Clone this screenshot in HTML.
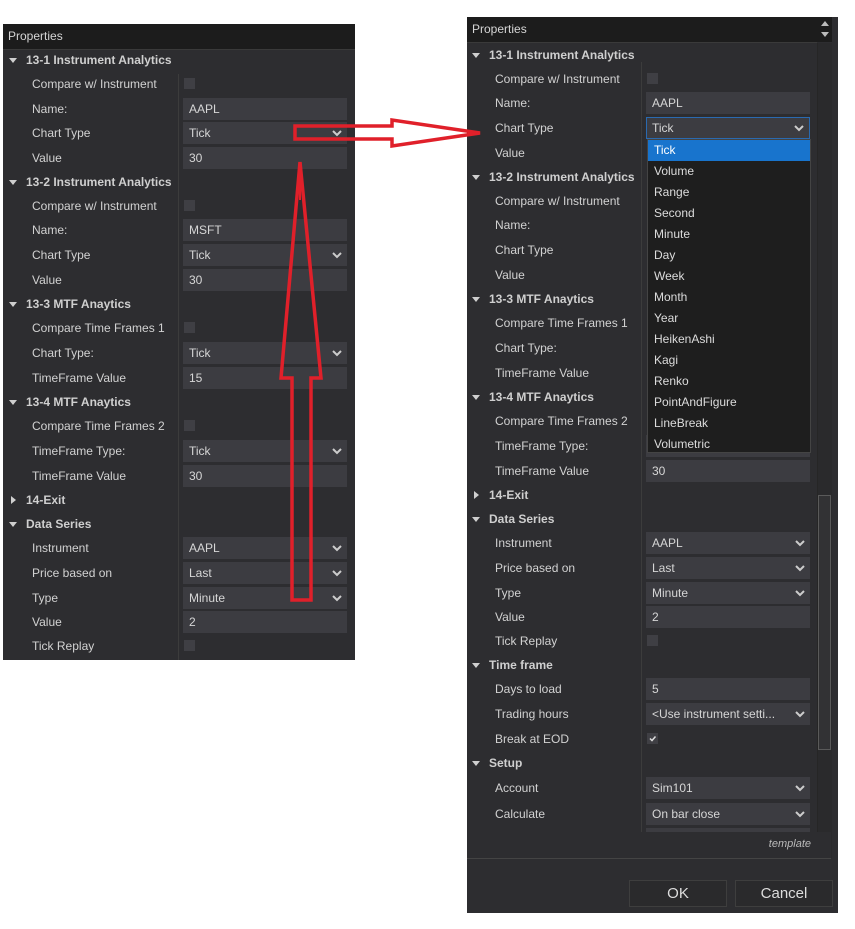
<!DOCTYPE html>
<html><head><meta charset="utf-8"><style>
body{margin:0;width:855px;height:929px;background:#fff;position:relative;overflow:hidden;font-family:"Liberation Sans",sans-serif;font-size:12px;color:#d2d2d2}
.p{position:absolute;background:#2d2d30;overflow:hidden}
.h{position:absolute;left:0;top:0;right:0;height:25px;background:#1c1c1c;color:#d6d6d6;font-size:12px;line-height:25px;padding-left:5px;border-bottom:1px solid #3a3a3a}
.r{position:absolute;left:0;width:100%;height:24px;line-height:24px}
.l{position:absolute;white-space:nowrap}
.s{font-weight:bold;color:#cfcfcf}
.t{position:absolute;top:10px;width:0;height:0;border-left:4.5px solid transparent;border-right:4.5px solid transparent;border-top:5px solid #cfcfcf}
.tr{position:absolute;top:8px;width:0;height:0;border-top:4.5px solid transparent;border-bottom:4.5px solid transparent;border-left:5px solid #cfcfcf}
.i{position:absolute;top:1px;height:22px;width:164px;background:#3c3c41;line-height:22px;box-sizing:border-box;padding-left:6px;color:#d6d6d6}
.c{position:absolute;top:6px;width:11px;height:11px;background:#3f3f44}
.v{position:absolute;right:5px;top:7px}
.d{position:absolute;width:1px;background:#3c3c3c}
.dl{position:absolute;background:#1e1e1e;border:1px solid #444;box-sizing:border-box}
.it{height:21px;line-height:21px;padding-left:6px;color:#dcdcdc;font-size:12px}
</style></head><body>

<!-- LEFT PANEL -->
<div class="p" style="left:3px;top:24px;width:352px;height:636px">
<div class="h">Properties</div>
<div class="d" style="left:175px;top:50px;height:586px"></div>
<div class="r" style="top:24px"><div class="t" style="left:6px"></div><span class="l s" style="left:23px">13-1 Instrument Analytics</span></div>
<div class="r" style="top:48px"><span class="l" style="left:29px">Compare w/ Instrument</span><div class="c" style="left:181px"></div></div>
<div class="r" style="top:73px"><span class="l" style="left:29px">Name:</span><div class="i" style="left:180px">AAPL</div></div>
<div class="r" style="top:97px"><span class="l" style="left:29px">Chart Type</span><div class="i" style="left:180px">Tick<svg class="v" width="10" height="8"><polyline points="1,2 5,6 9,2" fill="none" stroke="#ccc" stroke-width="2"/></svg></div></div>
<div class="r" style="top:122px"><span class="l" style="left:29px">Value</span><div class="i" style="left:180px">30</div></div>
<div class="r" style="top:146px"><div class="t" style="left:6px"></div><span class="l s" style="left:23px">13-2 Instrument Analytics</span></div>
<div class="r" style="top:170px"><span class="l" style="left:29px">Compare w/ Instrument</span><div class="c" style="left:181px"></div></div>
<div class="r" style="top:194px"><span class="l" style="left:29px">Name:</span><div class="i" style="left:180px">MSFT</div></div>
<div class="r" style="top:219px"><span class="l" style="left:29px">Chart Type</span><div class="i" style="left:180px">Tick<svg class="v" width="10" height="8"><polyline points="1,2 5,6 9,2" fill="none" stroke="#ccc" stroke-width="2"/></svg></div></div>
<div class="r" style="top:244px"><span class="l" style="left:29px">Value</span><div class="i" style="left:180px">30</div></div>
<div class="r" style="top:268px"><div class="t" style="left:6px"></div><span class="l s" style="left:23px">13-3 MTF Anaytics</span></div>
<div class="r" style="top:292px"><span class="l" style="left:29px">Compare Time Frames 1</span><div class="c" style="left:181px"></div></div>
<div class="r" style="top:317px"><span class="l" style="left:29px">Chart Type:</span><div class="i" style="left:180px">Tick<svg class="v" width="10" height="8"><polyline points="1,2 5,6 9,2" fill="none" stroke="#ccc" stroke-width="2"/></svg></div></div>
<div class="r" style="top:342px"><span class="l" style="left:29px">TimeFrame Value</span><div class="i" style="left:180px">15</div></div>
<div class="r" style="top:366px"><div class="t" style="left:6px"></div><span class="l s" style="left:23px">13-4 MTF Anaytics</span></div>
<div class="r" style="top:390px"><span class="l" style="left:29px">Compare Time Frames 2</span><div class="c" style="left:181px"></div></div>
<div class="r" style="top:415px"><span class="l" style="left:29px">TimeFrame Type:</span><div class="i" style="left:180px">Tick<svg class="v" width="10" height="8"><polyline points="1,2 5,6 9,2" fill="none" stroke="#ccc" stroke-width="2"/></svg></div></div>
<div class="r" style="top:440px"><span class="l" style="left:29px">TimeFrame Value</span><div class="i" style="left:180px">30</div></div>
<div class="r" style="top:464px"><div class="tr" style="left:8px"></div><span class="l s" style="left:23px">14-Exit</span></div>
<div class="r" style="top:488px"><div class="t" style="left:6px"></div><span class="l s" style="left:23px">Data Series</span></div>
<div class="r" style="top:512px"><span class="l" style="left:29px">Instrument</span><div class="i" style="left:180px">AAPL<svg class="v" width="10" height="8"><polyline points="1,2 5,6 9,2" fill="none" stroke="#ccc" stroke-width="2"/></svg></div></div>
<div class="r" style="top:537px"><span class="l" style="left:29px">Price based on</span><div class="i" style="left:180px">Last<svg class="v" width="10" height="8"><polyline points="1,2 5,6 9,2" fill="none" stroke="#ccc" stroke-width="2"/></svg></div></div>
<div class="r" style="top:562px"><span class="l" style="left:29px">Type</span><div class="i" style="left:180px">Minute<svg class="v" width="10" height="8"><polyline points="1,2 5,6 9,2" fill="none" stroke="#ccc" stroke-width="2"/></svg></div></div>
<div class="r" style="top:586px"><span class="l" style="left:29px">Value</span><div class="i" style="left:180px">2</div></div>
<div class="r" style="top:610px"><span class="l" style="left:29px">Tick Replay</span><div class="c" style="left:181px"></div></div>
</div>

<!-- RIGHT PANEL -->
<div class="p" style="left:467px;top:17px;width:371px;height:896px">
<div class="h" style="right:21px">Properties</div>
<div style="position:absolute;left:350px;top:0;width:15px;height:25px;background:#1c1c1c"></div>
<div style="position:absolute;left:354px;top:4px;border-left:4px solid transparent;border-right:4px solid transparent;border-bottom:5px solid #bbb"></div>
<div style="position:absolute;left:354px;top:15px;border-left:4px solid transparent;border-right:4px solid transparent;border-top:5px solid #bbb"></div>
<div style="position:absolute;left:350px;top:26px;width:14px;height:815px;background:#2a2a2c;border-left:1px solid #262626"></div>
<div style="position:absolute;left:351px;top:478px;width:11px;height:253px;background:#323234;border:1px solid #5a5a5a"></div>
<div style="position:relative;top:1px">
<div class="d" style="left:174px;top:44px;height:770px"></div>
<div class="r" style="top:25px"><div class="t" style="left:5px"></div><span class="l s" style="left:22px">13-1 Instrument Analytics</span></div>
<div class="r" style="top:49px"><span class="l" style="left:28px">Compare w/ Instrument</span><div class="c" style="left:180px"></div></div>
<div class="r" style="top:73px"><span class="l" style="left:28px">Name:</span><div class="i" style="left:179px">AAPL</div></div>
<div class="r" style="top:98px"><span class="l" style="left:28px">Chart Type</span><div class="i" style="left:179px;border:1px solid #2a6ab0;padding-left:5px;line-height:20px">Tick<svg class="v" width="10" height="8" style="top:6px"><polyline points="1,2 5,6 9,2" fill="none" stroke="#ccc" stroke-width="2"/></svg></div></div>
<div class="r" style="top:123px"><span class="l" style="left:28px">Value</span></div>
<div class="r" style="top:147px"><div class="t" style="left:5px"></div><span class="l s" style="left:22px">13-2 Instrument Analytics</span></div>
<div class="r" style="top:171px"><span class="l" style="left:28px">Compare w/ Instrument</span></div>
<div class="r" style="top:195px"><span class="l" style="left:28px">Name:</span></div>
<div class="r" style="top:220px"><span class="l" style="left:28px">Chart Type</span></div>
<div class="r" style="top:245px"><span class="l" style="left:28px">Value</span></div>
<div class="r" style="top:269px"><div class="t" style="left:5px"></div><span class="l s" style="left:22px">13-3 MTF Anaytics</span></div>
<div class="r" style="top:293px"><span class="l" style="left:28px">Compare Time Frames 1</span></div>
<div class="r" style="top:318px"><span class="l" style="left:28px">Chart Type:</span></div>
<div class="r" style="top:343px"><span class="l" style="left:28px">TimeFrame Value</span></div>
<div class="r" style="top:367px"><div class="t" style="left:5px"></div><span class="l s" style="left:22px">13-4 MTF Anaytics</span></div>
<div class="r" style="top:391px"><span class="l" style="left:28px">Compare Time Frames 2</span></div>
<div class="r" style="top:416px"><span class="l" style="left:28px">TimeFrame Type:</span><div class="i" style="left:179px"></div></div>
<div class="r" style="top:441px"><span class="l" style="left:28px">TimeFrame Value</span><div class="i" style="left:179px">30</div></div>
<div class="r" style="top:465px"><div class="tr" style="left:7px"></div><span class="l s" style="left:22px">14-Exit</span></div>
<div class="r" style="top:489px"><div class="t" style="left:5px"></div><span class="l s" style="left:22px">Data Series</span></div>
<div class="r" style="top:513px"><span class="l" style="left:28px">Instrument</span><div class="i" style="left:179px">AAPL<svg class="v" width="10" height="8"><polyline points="1,2 5,6 9,2" fill="none" stroke="#ccc" stroke-width="2"/></svg></div></div>
<div class="r" style="top:538px"><span class="l" style="left:28px">Price based on</span><div class="i" style="left:179px">Last<svg class="v" width="10" height="8"><polyline points="1,2 5,6 9,2" fill="none" stroke="#ccc" stroke-width="2"/></svg></div></div>
<div class="r" style="top:563px"><span class="l" style="left:28px">Type</span><div class="i" style="left:179px">Minute<svg class="v" width="10" height="8"><polyline points="1,2 5,6 9,2" fill="none" stroke="#ccc" stroke-width="2"/></svg></div></div>
<div class="r" style="top:587px"><span class="l" style="left:28px">Value</span><div class="i" style="left:179px">2</div></div>
<div class="r" style="top:611px"><span class="l" style="left:28px">Tick Replay</span><div class="c" style="left:180px"></div></div>
<div class="r" style="top:635px"><div class="t" style="left:5px"></div><span class="l s" style="left:22px">Time frame</span></div>
<div class="r" style="top:659px"><span class="l" style="left:28px">Days to load</span><div class="i" style="left:179px">5</div></div>
<div class="r" style="top:684px"><span class="l" style="left:28px">Trading hours</span><div class="i" style="left:179px">&lt;Use instrument setti...<svg class="v" width="10" height="8"><polyline points="1,2 5,6 9,2" fill="none" stroke="#ccc" stroke-width="2"/></svg></div></div>
<div class="r" style="top:709px"><span class="l" style="left:28px">Break at EOD</span><div class="c" style="left:180px"><svg width="11" height="11" style="position:absolute;left:0;top:0"><polyline points="3,5.5 5,7.5 8.5,3.5" fill="none" stroke="#ddd" stroke-width="1.5"/></svg></div></div>
<div class="r" style="top:733px"><div class="t" style="left:5px"></div><span class="l s" style="left:22px">Setup</span></div>
<div class="r" style="top:758px"><span class="l" style="left:28px">Account</span><div class="i" style="left:179px">Sim101<svg class="v" width="10" height="8"><polyline points="1,2 5,6 9,2" fill="none" stroke="#ccc" stroke-width="2"/></svg></div></div>
<div class="r" style="top:784px"><span class="l" style="left:28px">Calculate</span><div class="i" style="left:179px">On bar close<svg class="v" width="10" height="8"><polyline points="1,2 5,6 9,2" fill="none" stroke="#ccc" stroke-width="2"/></svg></div></div>
<div style="position:absolute;left:179px;top:810px;width:164px;height:4px;background:#3c3c41"></div>
</div>
<div style="position:absolute;left:0;top:815px;width:364px;height:26px;background:#2d2d30"></div>
<div style="position:absolute;right:27px;top:821px;font-style:italic;font-size:11px;color:#bbb">template</div>
<div style="position:absolute;left:0;top:841px;width:364px;height:1px;background:#444"></div>
<div style="position:absolute;left:162px;top:863px;width:96px;height:25px;border:1px solid #3e3e3e;background:#2a2a2c;text-align:center;line-height:25px;font-size:15px;color:#ddd">OK</div>
<div style="position:absolute;left:268px;top:863px;width:96px;height:25px;border:1px solid #3e3e3e;background:#2a2a2c;text-align:center;line-height:25px;font-size:15px;color:#ddd">Cancel</div>

<div class="dl" style="left:180px;top:122px;width:164px;height:314px">
<div class="it" style="background:#1874cd;color:#fff">Tick</div>
<div class="it">Volume</div><div class="it">Range</div><div class="it">Second</div><div class="it">Minute</div><div class="it">Day</div><div class="it">Week</div><div class="it">Month</div><div class="it">Year</div><div class="it">HeikenAshi</div><div class="it">Kagi</div><div class="it">Renko</div><div class="it">PointAndFigure</div><div class="it">LineBreak</div><div class="it">Volumetric</div>
</div>
</div>

<!-- ARROWS -->
<svg style="position:absolute;left:0;top:0" width="855" height="929">
<polygon points="295,126 392,126 392,120 480,133 392,146 392,139 295,139" fill="none" stroke="#e0202a" stroke-width="3.5"/>
<polygon points="300,162 321,378 311,378 311,600 292,600 292,378 281,378" fill="none" stroke="#e0202a" stroke-width="3.5"/>
<line x1="300" y1="175" x2="300" y2="200" stroke="#e0202a" stroke-width="2"/>
</svg>
</body></html>
